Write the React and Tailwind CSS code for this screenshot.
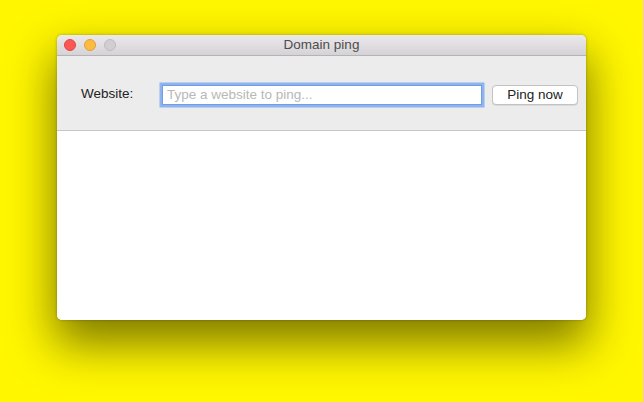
export default function App() {
  return (
    <div
      className="w-[643px] h-[402px] bg-[#fff600] pt-[35px] pl-[57px] overflow-hidden"
      style={{ fontFamily: '"Liberation Sans", Arial, sans-serif' }}
    >
      <div className="w-[529px] h-[285px] rounded-[5px] overflow-hidden bg-white flex flex-col shadow-[0_22px_45px_2px_rgba(0,0,0,0.5),0_0_3px_rgba(0,0,0,0.3)]">
        <div className="relative h-[21px] shrink-0 bg-gradient-to-b from-[#ebe9eb] to-[#d5d3d5] border-b border-[#b5b3b5] flex items-center justify-center">
          <div className="absolute left-[7px] top-[4px] flex gap-[8px]">
            <div className="w-[12px] h-[12px] rounded-full bg-[#fc5753] border border-[#df4744]" />
            <div className="w-[12px] h-[12px] rounded-full bg-[#fdbc40] border border-[#de9f34]" />
            <div className="w-[12px] h-[12px] rounded-full bg-[#d0ced0] border border-[#bdbbbd]" />
          </div>
          <span className="text-[13.5px] text-[#4d4d4d] leading-none">Domain ping</span>
        </div>
        <div className="h-[75px] shrink-0 bg-[#ececec] border-b border-[#c6c6c6] flex items-center pt-[3px] pl-[24px]">
          <span className="w-[81px] text-[13.5px] text-[#222]">Website:</span>
          <div className="w-[320px] h-[20px] bg-white border border-[#6f9ee6] shadow-[0_0_0_2.5px_rgba(125,170,238,0.85)] flex items-center pl-[4px]">
            <span className="text-[13.5px] text-[#b8b8b8] leading-none">Type a website to ping...</span>
          </div>
          <div className="ml-[10px] w-[86px] h-[20px] bg-white border border-[#c3c3c3] rounded-[4px] flex items-center justify-center shadow-[0_0.5px_0.5px_rgba(0,0,0,0.15)]">
            <span className="text-[13.5px] text-[#222] leading-none">Ping now</span>
          </div>
        </div>
        <div className="flex-1 bg-white" />
      </div>
    </div>
  );
}
